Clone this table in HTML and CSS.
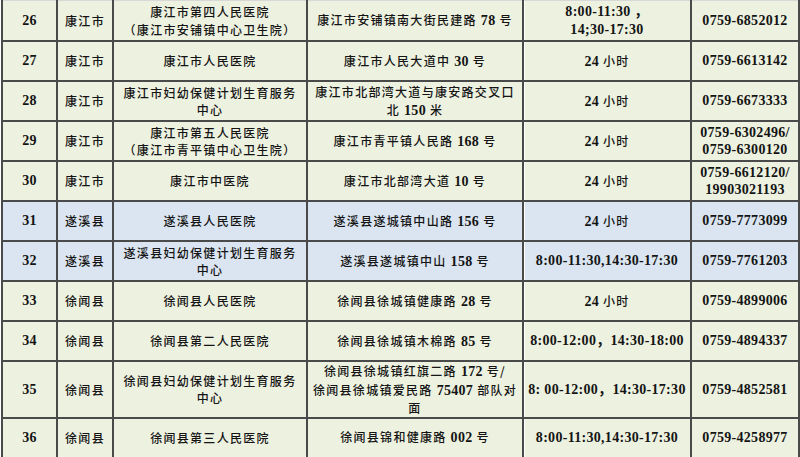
FILE: index.html
```html
<!DOCTYPE html>
<html lang="zh">
<head>
<meta charset="utf-8">
<link rel="stylesheet" href="styles.css">
</head>
<body>
<table class="list">
  <colgroup>
    <col class="c-no"><col class="c-city"><col class="c-name"><col class="c-addr"><col class="c-hours"><col class="c-tel">
  </colgroup>
  <tbody>
    <tr class="g first">
      <td class="num">26</td><td>康江市</td><td>康江市第四人民医院<br>（康江市安铺镇中心卫生院）</td><td>康江市安铺镇南大街民建路 <span class="n">78</span> 号</td><td class="h num">8:00-11:30 ，<br>14;30-17:30</td><td class="num">0759-6852012</td>
    </tr>
    <tr class="g">
      <td class="num">27</td><td>康江市</td><td>康江市人民医院</td><td>康江市人民大道中 <span class="n">30</span> 号</td><td class="h"><span class="n">24</span> 小时</td><td class="num">0759-6613142</td>
    </tr>
    <tr class="g">
      <td class="num">28</td><td>康江市</td><td>康江市妇幼保健计划生育服务<br>中心</td><td>康江市北部湾大道与康安路交叉口<br>北 <span class="n">150</span> 米</td><td class="h"><span class="n">24</span> 小时</td><td class="num">0759-6673333</td>
    </tr>
    <tr class="g">
      <td class="num">29</td><td>康江市</td><td>康江市第五人民医院<br>（康江市青平镇中心卫生院）</td><td>康江市青平镇人民路 <span class="n">168</span> 号</td><td class="h"><span class="n">24</span> 小时</td><td class="num">0759-6302496/<br>0759-6300120</td>
    </tr>
    <tr class="g">
      <td class="num">30</td><td>康江市</td><td>康江市中医院</td><td>康江市北部湾大道 <span class="n">10</span> 号</td><td class="h"><span class="n">24</span> 小时</td><td class="num">0759-6612120/<br>19903021193</td>
    </tr>
    <tr class="b">
      <td class="num">31</td><td>遂溪县</td><td>遂溪县人民医院</td><td>遂溪县遂城镇中山路 <span class="n">156</span> 号</td><td class="h"><span class="n">24</span> 小时</td><td class="num">0759-7773099</td>
    </tr>
    <tr class="b">
      <td class="num">32</td><td>遂溪县</td><td>遂溪县妇幼保健计划生育服务<br>中心</td><td>遂溪县遂城镇中山 <span class="n">158</span> 号</td><td class="h num">8:00-11:30,14:30-17:30</td><td class="num">0759-7761203</td>
    </tr>
    <tr class="g">
      <td class="num">33</td><td>徐闻县</td><td>徐闻县人民医院</td><td>徐闻县徐城镇健康路 <span class="n">28</span> 号</td><td class="h"><span class="n">24</span> 小时</td><td class="num">0759-4899006</td>
    </tr>
    <tr class="g">
      <td class="num">34</td><td>徐闻县</td><td>徐闻县第二人民医院</td><td>徐闻县徐城镇木棉路 <span class="n">85</span> 号</td><td class="h num">8:00-12:00，14:30-18:00</td><td class="num">0759-4894337</td>
    </tr>
    <tr class="g tall">
      <td class="num">35</td><td>徐闻县</td><td>徐闻县妇幼保健计划生育服务<br>中心</td><td>徐闻县徐城镇红旗二路 <span class="n">172</span> 号/<br>徐闻县徐城镇爱民路 <span class="n">75407</span> 部队对<br>面</td><td class="h num">8: 00-12:00，14:30-17:30</td><td class="num">0759-4852581</td>
    </tr>
    <tr class="g">
      <td class="num">36</td><td>徐闻县</td><td>徐闻县第三人民医院</td><td>徐闻县锦和健康路 <span class="n">002</span> 号</td><td class="h num">8:00-11:30,14:30-17:30</td><td class="num">0759-4258977</td>
    </tr>
  </tbody>
</table>
</body>
</html>
```
FILE: styles.css
```css
html, body {
  margin: 0;
  padding: 0;
  background: #ffffff;
}

.list {
  margin: 0 0 0 1px;
  border-collapse: collapse;
  table-layout: fixed;
  width: 797px;
  font-family: "Noto Sans CJK SC", sans-serif;
  font-size: 12px;
  font-weight: 500;
  letter-spacing: 1.3px;
  line-height: 17.5px;
  color: #141414;
  border-top: 1px solid #d8d8d8;
}

.c-no { width: 55px; }
.c-city { width: 56px; }
.c-name { width: 194px; }
.c-addr { width: 216px; }
.c-hours { width: 168px; }
.c-tel { width: 108px; }

.list td {
  border-left: 2px solid #4a4a4a;
  border-right: 2px solid #4a4a4a;
  border-bottom: 2px solid #4a4a4a;
  text-align: center;
  vertical-align: middle;
  padding: 0 1px;
  height: 38px;
  white-space: nowrap;
}

.list td.num,
.list .n {
  font-family: "Liberation Serif", "Noto Sans CJK SC", serif;
  font-size: 14px;
  font-weight: 700;
  letter-spacing: 0.3px;
}

.list tr.first td {
  height: 39px;
}

.list tr.tall td {
  height: 51px;
}

.list tr.g td {
  background: #edf1e0;
}

.list tr.b td {
  background: #dbe5f1;
}

.list td.h {
  box-shadow: inset 1px 0 0 #ffffff;
}
```
